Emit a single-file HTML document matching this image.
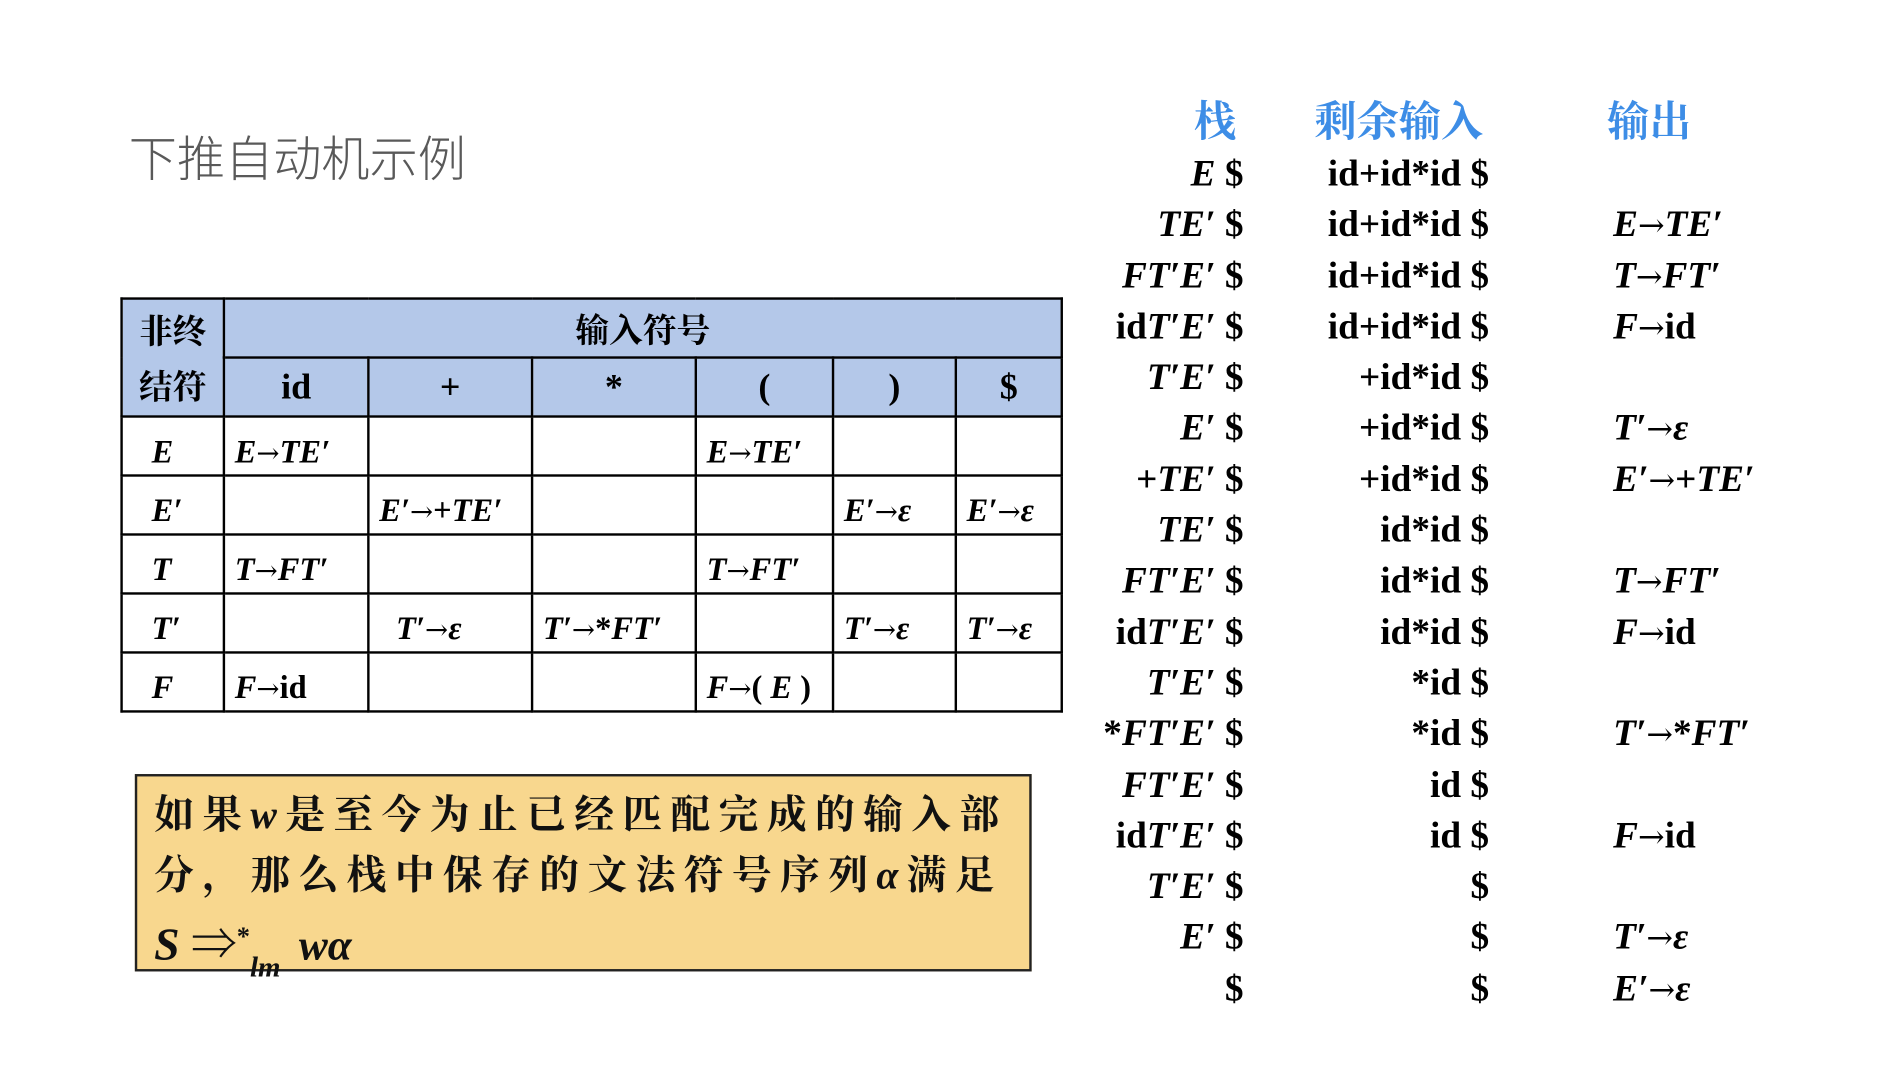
<!DOCTYPE html>
<html><head><meta charset="utf-8"><style>
html,body{margin:0;padding:0;background:#fff;width:1878px;height:1088px;overflow:hidden}
#w{position:absolute;left:0;top:0;width:1560px;height:904px;transform:scale(1.2038);transform-origin:0 0}
.a{position:absolute;white-space:nowrap}
.s{font-family:"Liberation Serif","Noto Serif CJK SC",serif;font-weight:bold}
i{font-style:italic}
b.r2{font-family:"DejaVu Serif",serif;font-weight:normal;font-size:0.85em;line-height:1}
.title{left:107px;top:100px;font:300 40px "Noto Sans CJK SC",sans-serif;color:#595959}
table{position:absolute;left:100px;top:247px;border-collapse:collapse;table-layout:fixed;width:781px;font-family:"Liberation Serif","Noto Serif CJK SC",serif;font-weight:bold;font-size:27px}
td{border:2px solid #000;padding:0 0 0 8px;box-sizing:border-box;vertical-align:middle;overflow:hidden;white-space:nowrap}
tr.b td{height:49px;padding-top:10px}
tr.h td{height:49px}
.h td{background:#b4c8e9;text-align:center;padding:0}
.hd{color:#3d8de6;font-family:"Noto Serif CJK SC",serif;font-weight:bold;font-size:35px;top:74px}
.r{font-size:31px}
.r div{height:42.3px;line-height:42.3px}
.box{left:112px;top:643px;width:741px;height:160px;background:#f8d78e;border:2px solid #222;font-family:"Liberation Serif","Noto Serif CJK SC",serif;font-weight:bold;font-size:33px;color:#111}
</style></head><body><div id="w">
<div class="a title">下推自动机示例</div>
<table>
<colgroup><col style="width:85px"><col style="width:120px"><col style="width:136px"><col style="width:136px"><col style="width:114px"><col style="width:102px"><col style="width:88px"></colgroup>
<tr class="h"><td rowspan="2" style="font-size:28px;line-height:46px;font-family:'Noto Serif CJK SC',serif">非终<br>结符</td><td colspan="6" style="font-size:28px;font-family:'Noto Serif CJK SC',serif">输入符号</td></tr>
<tr class="h" style="font-size:30px"><td>id</td><td>+</td><td>*</td><td>(</td><td>)</td><td>$</td></tr>
<tr class="b"><td style="padding-left:24px"><i>E</i></td><td><i>E</i><b class="r2">→</b><i>TE′</i></td><td></td><td></td><td><i>E</i><b class="r2">→</b><i>TE′</i></td><td></td><td></td></tr>
<tr class="b"><td style="padding-left:24px"><i>E′</i></td><td></td><td><i>E′</i><b class="r2">→</b>+<i>TE′</i></td><td></td><td></td><td><i>E′</i><b class="r2">→</b><i>ε</i></td><td><i>E′</i><b class="r2">→</b><i>ε</i></td></tr>
<tr class="b"><td style="padding-left:24px"><i>T</i></td><td><i>T</i><b class="r2">→</b><i>FT′</i></td><td></td><td></td><td><i>T</i><b class="r2">→</b><i>FT′</i></td><td></td><td></td></tr>
<tr class="b"><td style="padding-left:24px"><i>T′</i></td><td></td><td style="padding-left:22px"><i>T′</i><b class="r2">→</b><i>ε</i></td><td><i>T′</i><b class="r2">→</b>*<i>FT′</i></td><td></td><td><i>T′</i><b class="r2">→</b><i>ε</i></td><td><i>T′</i><b class="r2">→</b><i>ε</i></td></tr>
<tr class="b"><td style="padding-left:24px"><i>F</i></td><td><i>F</i><b class="r2">→</b>id</td><td></td><td></td><td><i>F</i><b class="r2">→</b>( <i>E</i> )</td><td></td><td></td></tr>
</table>
<div class="a box"><div style="position:absolute;left:14px;top:8px;line-height:50px;letter-spacing:7px">如果<i>w</i>是至今为止已经匹配完成的输入部<br>分，那么栈中保存的文法符号序列<i>α</i>满足<br><span style="font-size:38px;letter-spacing:0"><i>S</i> ⇒</span><sup style="font-size:22px;letter-spacing:0">*</sup><sub style="font-size:24px;position:relative;top:6px;letter-spacing:0"><i>lm</i></sub> <i style="font-size:36px;letter-spacing:0">wα</i></div></div>
<div class="a hd" style="left:992px">栈</div>
<div class="a hd" style="left:1092px">剩余输入</div>
<div class="a hd" style="left:1335px">输出</div>
<div class="a s r" style="right:527px;top:123px;text-align:right">
<div><i>E</i> $</div><div><i>TE′</i> $</div><div><i>FT′E′</i> $</div><div>id<i>T′E′</i> $</div><div><i>T′E′</i> $</div><div><i>E′</i> $</div><div>+<i>TE′</i> $</div><div><i>TE′</i> $</div><div><i>FT′E′</i> $</div><div>id<i>T′E′</i> $</div><div><i>T′E′</i> $</div><div>*<i>FT′E′</i> $</div><div><i>FT′E′</i> $</div><div>id<i>T′E′</i> $</div><div><i>T′E′</i> $</div><div><i>E′</i> $</div><div>$</div></div>
<div class="a s r" style="right:323px;top:123px;text-align:right">
<div>id+id*id $</div><div>id+id*id $</div><div>id+id*id $</div><div>id+id*id $</div><div>+id*id $</div><div>+id*id $</div><div>+id*id $</div><div>id*id $</div><div>id*id $</div><div>id*id $</div><div>*id $</div><div>*id $</div><div>id $</div><div>id $</div><div>$</div><div>$</div><div>$</div></div>
<div class="a s r" style="left:1340px;top:123px">
<div></div><div><i>E</i><b class="r2">→</b><i>TE′</i></div><div><i>T</i><b class="r2">→</b><i>FT′</i></div><div><i>F</i><b class="r2">→</b>id</div><div></div><div><i>T′</i><b class="r2">→</b><i>ε</i></div><div><i>E′</i><b class="r2">→</b>+<i>TE′</i></div><div></div><div><i>T</i><b class="r2">→</b><i>FT′</i></div><div><i>F</i><b class="r2">→</b>id</div><div></div><div><i>T′</i><b class="r2">→</b>*<i>FT′</i></div><div></div><div><i>F</i><b class="r2">→</b>id</div><div></div><div><i>T′</i><b class="r2">→</b><i>ε</i></div><div><i>E′</i><b class="r2">→</b><i>ε</i></div></div>
</div></body></html>
